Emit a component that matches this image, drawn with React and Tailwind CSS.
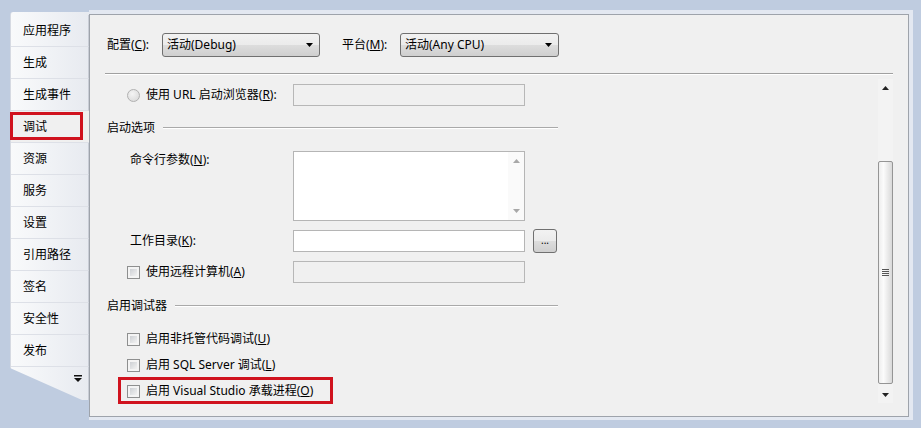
import React from "react";

const Tri = ({ up = false, color = "#000", className = "" }) => (
  <svg width="7" height="4" viewBox="0 0 7 4" className={className}>
    {up ? <path d="M0 4h7L3.5 0z" fill={color} /> : <path d="M0 0h7L3.5 4z" fill={color} />}
  </svg>
);

const Combo = ({ text, w }) => (
  <div
    className={`relative h-[24px] ${w} rounded-[3px] border border-[#707070] bg-[linear-gradient(#f2f2f2_0%,#ebebeb_50%,#dddddd_50%,#cfcfcf_100%)] flex items-center pl-[4px]`}
  >
    <span>{text}</span>
    <Tri className="absolute right-[6px] top-[9px]" />
  </div>
);

const Checkbox = () => (
  <div className="w-[13px] h-[13px] shrink-0 border border-[#8e8f8f] bg-[#f4f4f4] p-[2px]">
    <div className="w-full h-full bg-[linear-gradient(135deg,#cdd0d4,#f2f2f2)]" />
  </div>
);

const Radio = () => (
  <div className="w-[13px] h-[13px] shrink-0 rounded-full border border-[#b0b0b0] bg-[radial-gradient(circle_at_40%_35%,#f4f4f4,#d6d6d6)]" />
);

const Disabled = () => (
  <div className="w-[232px] h-[22px] border border-[#b7b7b7] bg-[#f0f0f0]" />
);

const Group = ({ label }) => (
  <div className="w-[453px] h-[16px] flex items-center pl-[2px]">
    <span>{label}</span>
    <div className="flex-1 ml-[8px] flex flex-col">
      <div className="h-px bg-[#a9a9a9]" />
      <div className="h-px bg-white" />
    </div>
  </div>
);

const CheckRow = ({ children }) => (
  <div className="h-[20px] flex items-center pl-[22px]">
    <Checkbox />
    <span className="ml-[6px]">{children}</span>
  </div>
);

const tabs = ["应用程序", "生成", "生成事件", "调试", "资源", "服务", "设置", "引用路径", "签名", "安全性", "发布"];

export default function App() {
  return (
    <div className="w-[921px] h-[428px] overflow-hidden bg-[#bfcce0] pt-[10px] pl-[10px] text-[12px] text-black font-['Noto_Sans','Noto_Sans_CJK_SC',sans-serif] leading-none">
      <div className="flex">
        {/* Tab strip */}
        <div className="mt-[2px] w-[79px] h-[388px] rounded-tl-[3px] bg-[linear-gradient(90deg,#f9fafb,#e7eaf0)] border-l border-[#d6dae2] pt-[3px] flex flex-col [clip-path:polygon(0_0,100%_0,100%_100%,72px_100%,0_356px)]">
          {tabs.map((t) =>
            t === "调试" ? (
              <div key={t} className="relative h-[32px] shrink-0 flex items-center pl-[12px] bg-[#f0f0f0] border-b border-[#dde0e7]">
                {t}
                <div className="absolute left-[-1px] top-[1px] w-[73px] h-[28px] border-[3px] border-[#d0121e]" />
              </div>
            ) : (
              <div key={t} className="h-[32px] shrink-0 flex items-center pl-[12px] border-b border-[#dde0e7] border-r border-r-[#c9cdd6]">
                {t}
              </div>
            )
          )}
          <div className="flex-1 border-r border-r-[#c9cdd6] flex justify-end pr-[6px] pt-[8px]">
            <svg width="8" height="7" viewBox="0 0 8 7">
              <rect x="0" y="0" width="8" height="1.5" fill="#111" />
              <path d="M0 3h8L4 7z" fill="#111" />
            </svg>
          </div>
        </div>

        {/* Panel wrapper (light frame) */}
        <div className="bg-[#e3e8f1] pt-[4px] pr-[4px] pb-[3px]">
          <div className="w-[820px] h-[403px] border border-[#9ea3ab] bg-[#f0f0f0] flex flex-col">
            {/* top bar */}
            <div className="flex items-center pl-[17px] pt-[18px]">
              <span className="w-[55px]">
                配置(<u>C</u>):
              </span>
              <Combo text="活动(Debug)" w="w-[158px]" />
              <span className="ml-[22px] w-[58px]">
                平台(<u>M</u>):
              </span>
              <Combo text="活动(Any CPU)" w="w-[159px]" />
            </div>
            <div className="mt-[16px] mx-[15px] flex flex-col">
              <div className="h-px bg-[#a0a0a0]" />
              <div className="h-px bg-white" />
            </div>

            {/* scroll region */}
            <div className="mx-[15px] mt-[4px] h-[324px] flex">
              <div className="flex-1 flex flex-col">
                {/* URL row */}
                <div className="mt-[5px] h-[22px] flex items-center">
                  <div className="w-[188px] flex items-center pl-[22px]">
                    <Radio />
                    <span className="ml-[6px]">
                      使用 URL 启动浏览器(<u>R</u>):
                    </span>
                  </div>
                  <Disabled />
                </div>

                <div className="mt-[14px]">
                  <Group label="启动选项" />
                </div>

                {/* command line */}
                <div className="mt-[15px] h-[70px] flex">
                  <div className="w-[188px] pl-[25px] pt-[3px]">
                    命令行参数(<u>N</u>):
                  </div>
                  <div className="w-[232px] h-[70px] border border-[#b5b5b5] bg-white flex justify-end">
                    <div className="w-[16px] h-full bg-[#fafafa] flex flex-col items-center justify-between py-[7px]">
                      <Tri up color="#a8a8a8" />
                      <Tri color="#a8a8a8" />
                    </div>
                  </div>
                </div>

                {/* working dir */}
                <div className="mt-[8px] h-[24px] flex items-center">
                  <div className="w-[188px] pl-[25px]">
                    工作目录(<u>K</u>):
                  </div>
                  <div className="w-[232px] h-[22px] border border-[#b5b5b5] bg-white" />
                  <div className="ml-[8px] w-[24px] h-[24px] rounded-[3px] border border-[#707070] bg-[linear-gradient(#f2f2f2_0%,#ebebeb_50%,#dddddd_50%,#cfcfcf_100%)] flex items-center justify-center text-[10px] pb-[2px]">
                    ...
                  </div>
                </div>

                {/* remote */}
                <div className="mt-[8px] h-[22px] flex items-center">
                  <div className="w-[188px] flex items-center pl-[22px]">
                    <Checkbox />
                    <span className="ml-[6px]">
                      使用远程计算机(<u>A</u>)
                    </span>
                  </div>
                  <Disabled />
                </div>

                <div className="mt-[15px]">
                  <Group label="启用调试器" />
                </div>

                <div className="mt-[15px]">
                  <CheckRow>
                    启用非托管代码调试(<u>U</u>)
                  </CheckRow>
                </div>
                <div className="mt-[6px]">
                  <CheckRow>
                    启用 SQL Server 调试(<u>L</u>)
                  </CheckRow>
                </div>
                <div className="mt-[6px] relative">
                  <CheckRow>
                    启用 Visual Studio 承载进程(<u>O</u>)
                  </CheckRow>
                  <div className="absolute left-[13px] top-[-4px] w-[215px] h-[27px] border-[3px] border-[#d0121e]" />
                </div>
              </div>

              {/* scrollbar */}
              <div className="w-[15px] h-full bg-[#f3f3f3] flex flex-col">
                <div className="h-[17px] flex items-center justify-center">
                  <Tri up color="#222" />
                </div>
                <div className="h-[65px]" />
                <div className="h-[223px] rounded-[2px] border border-[#959595] bg-[linear-gradient(90deg,#eeeeee,#fbfbfb_35%,#d9d9d9)] flex items-center justify-center">
                  <svg width="7" height="8" viewBox="0 0 7 8">
                    <rect x="0" y="0" width="7" height="1" fill="#555" />
                    <rect x="0" y="2" width="7" height="1" fill="#555" />
                    <rect x="0" y="4" width="7" height="1" fill="#555" />
                    <rect x="0" y="6" width="7" height="1" fill="#555" />
                  </svg>
                </div>
                <div className="h-[2px]" />
                <div className="h-[17px] flex items-center justify-center">
                  <Tri color="#222" />
                </div>
              </div>
            </div>
          </div>
        </div>
      </div>
    </div>
  );
}
